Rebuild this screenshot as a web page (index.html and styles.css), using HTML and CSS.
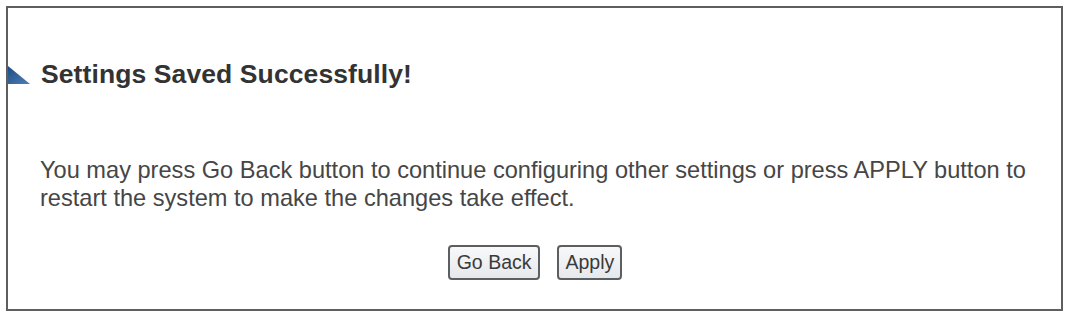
FILE: index.html
```html
<!DOCTYPE html>
<html>
<head>
<meta charset="utf-8">
<title>Settings Saved</title>
<link rel="stylesheet" href="styles.css">
</head>
<body>
<div class="frame">
  <h1 class="title">
    <svg class="marker" width="22" height="18" viewBox="0 0 22 18" aria-hidden="true">
      <defs>
        <linearGradient id="mk" x1="0" y1="0" x2="1" y2="1">
          <stop offset="0" stop-color="#1d4c86"/>
          <stop offset="1" stop-color="#4f7fb4"/>
        </linearGradient>
      </defs>
      <polygon points="0,0 22,18 0,18" fill="url(#mk)"/>
    </svg><span>Settings Saved Successfully!</span>
  </h1>
  <p class="message">You may press Go Back button to continue configuring other settings or press APPLY button to restart the system to make the changes take effect.</p>
  <div class="actions">
    <button class="btn" type="button">Go Back</button>
    <button class="btn" type="button">Apply</button>
  </div>
</div>
</body>
</html>
```
FILE: styles.css
```css
html, body {
  margin: 0;
  padding: 0;
  background: #ffffff;
}

body {
  font-family: "Liberation Sans", Arial, sans-serif;
}

.frame {
  box-sizing: border-box;
  margin: 6px 0 0 6px;
  width: 1057px;
  height: 305px;
  border: 2px solid #5f5f5f;
  background: #ffffff;
}

.title {
  display: flex;
  align-items: flex-end;
  margin: 51px 0 0 0;
  font-size: 26.5px;
  line-height: 30px;
  font-weight: bold;
  letter-spacing: 0.1px;
  color: #333333;
}

.marker {
  display: block;
  flex: none;
  margin: 0 11px 5px 0;
}

.message {
  margin: 67px 0 0 0;
  padding: 0 20px 0 32px;
  font-size: 23.6px;
  line-height: 28px;
  color: #464646;
}

.actions {
  display: flex;
  justify-content: center;
  gap: 17px;
  margin-top: 33px;
  padding-left: 1px;
}

.btn {
  box-sizing: border-box;
  height: 35px;
  padding: 0 6px 0 7px;
  font-family: "Liberation Sans", Arial, sans-serif;
  font-size: 19.5px;
  color: #3a3a3a;
  background: linear-gradient(#f7f8f9, #e6e9ec);
  border: 2px solid #5c5f62;
  border-radius: 4px;
}
```
